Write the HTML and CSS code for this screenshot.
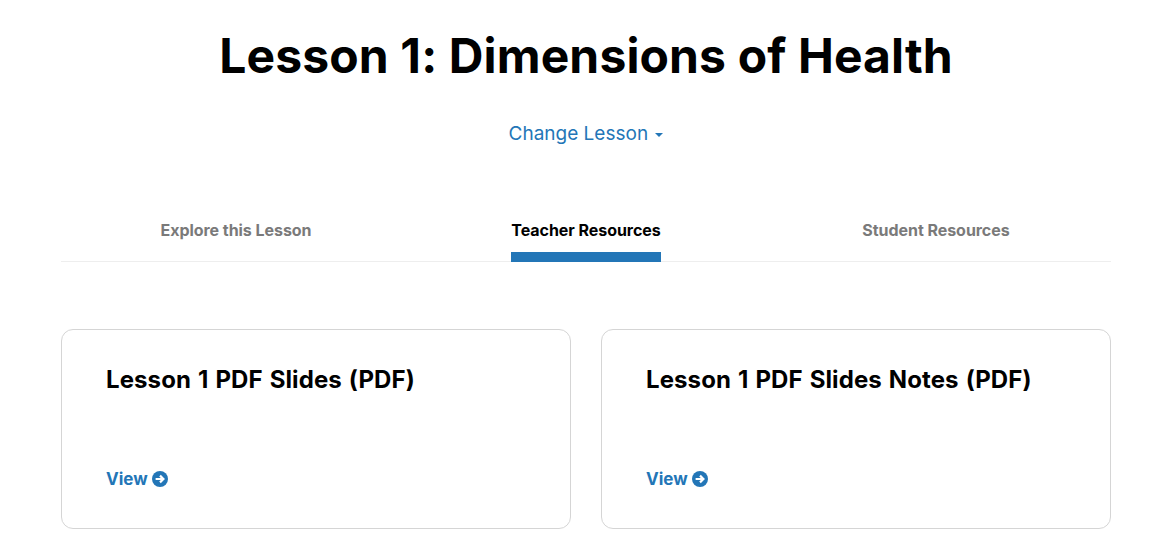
FILE: index.html
```html
<!DOCTYPE html>
<html lang="en">

<head>
    <meta charset="UTF-8">
    <meta name="viewport" content="width=device-width, initial-scale=1.0">
    <title>Lesson 1: Dimensions of Health</title>
    <link rel="stylesheet" href="styles.css">
</head>

<body>
    <div class="page">
        <h1 class="title">Lesson 1: Dimensions of Health</h1>
        <a class="change" href="#">Change Lesson <span class="caret"></span></a>

        <div class="tabs">
            <div class="tab"><a href="#">Explore this Lesson</a></div>
            <div class="tab active"><a href="#">Teacher Resources</a></div>
            <div class="tab"><a href="#">Student Resources</a></div>
        </div>

        <div class="cards">
            <div class="card">
                <h2>Lesson 1 PDF Slides (PDF)</h2>
                <a class="view" href="#">View
                    <svg viewBox="0 0 16 16" width="16" height="16">
                        <circle cx="8" cy="8" r="8" fill="#2376b7" />
                        <path d="M3.6 8h7.6M8 4.6L11.4 8 8 11.4" fill="none" stroke="#fff" stroke-width="2.2" />
                    </svg>
                </a>
            </div>
            <div class="card">
                <h2>Lesson 1 PDF Slides Notes (PDF)</h2>
                <a class="view" href="#">View
                    <svg viewBox="0 0 16 16" width="16" height="16">
                        <circle cx="8" cy="8" r="8" fill="#2376b7" />
                        <path d="M3.6 8h7.6M8 4.6L11.4 8 8 11.4" fill="none" stroke="#fff" stroke-width="2.2" />
                    </svg>
                </a>
            </div>
        </div>
    </div>
</body>

</html>
```

FILE: styles.css
```css
body {
    margin: 0;
    background-color: #fff;
    color: #000;
    font-family: "Inter", "Open Sans", sans-serif;
}

a {
    text-decoration: none;
}

.page {
    width: 1050px;
    margin-left: 61px;
    display: flex;
    flex-direction: column;
    align-items: center;
}

.title {
    margin: 26px 0 0;
    font-size: 48px;
    line-height: 60px;
    font-weight: 700;
    letter-spacing: 0.13px;
}

.change {
    margin-top: 34px;
    font-size: 19px;
    line-height: 28px;
    color: #2376b7;
}

.caret {
    display: inline-block;
    width: 0;
    height: 0;
    margin-left: 2px;
    vertical-align: middle;
    border-top: 4px solid #2376b7;
    border-left: 4px solid transparent;
    border-right: 4px solid transparent;
}

.tabs {
    width: 100%;
    margin-top: 65px;
    display: grid;
    grid-template-columns: repeat(3, 1fr);
    border-bottom: 1px solid #eee;
}

.tab {
    display: flex;
    justify-content: center;
}

.tab a {
    height: 48px;
    padding-top: 5px;
    box-sizing: border-box;
    font-size: 16px;
    line-height: 24px;
    font-weight: 700;
    letter-spacing: -0.05px;
    color: #7a7a7a;
}

.tab.active a {
    color: #000;
    border-bottom: 10px solid #2376b7;
    margin-bottom: -1px;
    height: 49px;
}

.cards {
    width: 100%;
    margin-top: 67px;
    display: grid;
    grid-template-columns: 1fr 1fr;
    gap: 30px;
}

.card {
    height: 200px;
    box-sizing: border-box;
    padding: 32px 44px 0;
    border: 1px solid #d5d5d5;
    border-radius: 12px;
    display: flex;
    flex-direction: column;
    justify-content: flex-start;
}

.card h2 {
    margin: 0;
    font-size: 24px;
    line-height: 36px;
    font-weight: 700;
    letter-spacing: 0.1px;
    word-spacing: 1.2px;
}

.view {
    margin-top: 68px;
    display: flex;
    align-items: center;
    gap: 4px;
    font-size: 17px;
    line-height: 26px;
    font-weight: 700;
    color: #2376b7;
}
```
